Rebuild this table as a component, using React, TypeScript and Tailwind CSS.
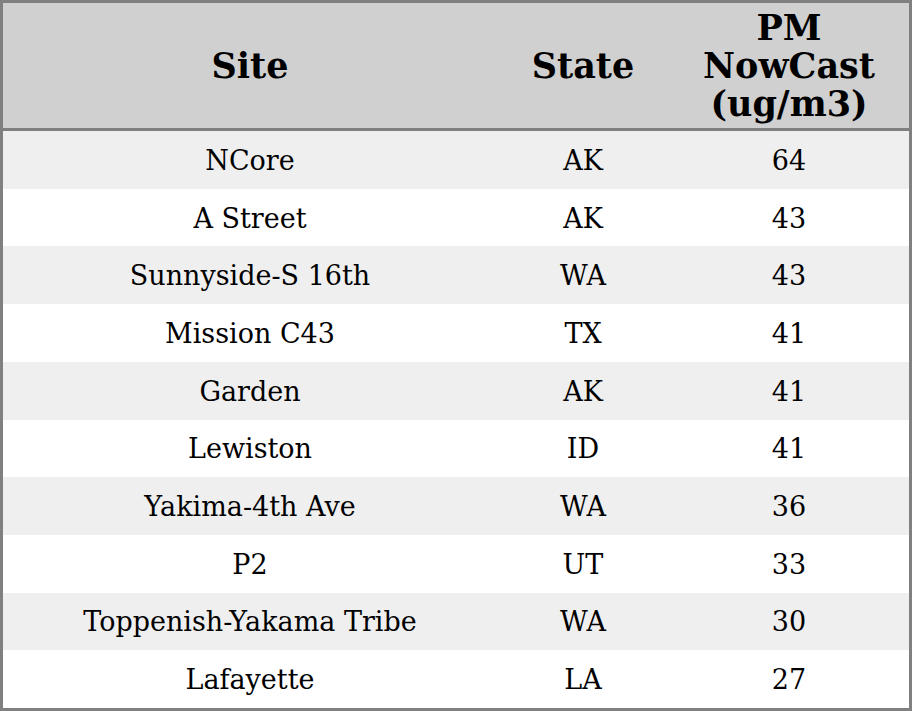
import React from "react";

const rows: [string, string, string][] = [
  ["NCore", "AK", "64"],
  ["A Street", "AK", "43"],
  ["Sunnyside-S 16th", "WA", "43"],
  ["Mission C43", "TX", "41"],
  ["Garden", "AK", "41"],
  ["Lewiston", "ID", "41"],
  ["Yakima-4th Ave", "WA", "36"],
  ["P2", "UT", "33"],
  ["Toppenish-Yakama Tribe", "WA", "30"],
  ["Lafayette", "LA", "27"],
];

export default function App() {
  return (
    <div
      className="w-[912px] h-[711px] bg-white border-[3px] border-[#808080] flex flex-col text-black"
      style={{ fontFamily: '"DejaVu Serif", serif' }}
    >
      <div className="h-[128px] pt-[1px] flex items-center bg-[#d0d0d0] border-b-[3px] border-[#808080] font-bold text-[35px] leading-[38px] text-center shrink-0">
        <div className="w-[494px]">Site</div>
        <div className="w-[172px]">State</div>
        <div className="w-[240px]">
          PM
          <br />
          NowCast
          <br />
          (ug/m3)
        </div>
      </div>
      {rows.map((r, i) => (
        <div
          key={i}
          className={`flex-1 flex items-center text-center text-[27px] leading-[32px] pt-[2px] ${i % 2 === 0 ? "bg-[#efefef]" : "bg-white"}`}
        >
          <div className="w-[494px]">{r[0]}</div>
          <div className="w-[172px]">{r[1]}</div>
          <div className="w-[240px]">{r[2]}</div>
        </div>
      ))}
    </div>
  );
}
